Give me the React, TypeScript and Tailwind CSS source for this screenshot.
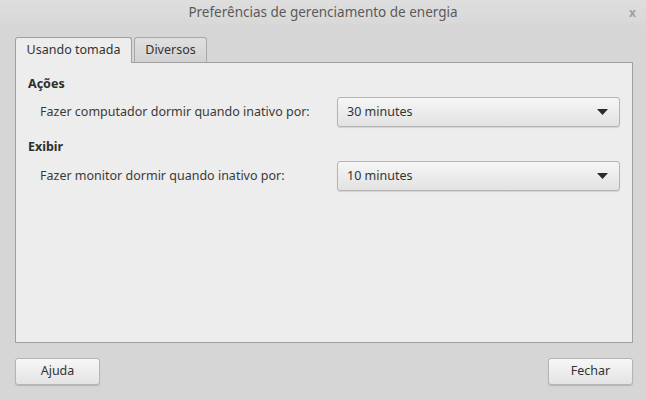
const font = { fontFamily: '"Noto Sans", "Open Sans", sans-serif' };

const Combo = ({ value }: { value: string }) => (
  <div className="flex h-[30px] w-[283px] items-center justify-between rounded-[3px] border border-[#b4b4b4] bg-gradient-to-b from-[#f6f6f6] to-[#e2e2e2] pl-[9px] pr-[11px] text-[#333] shadow-[0_1px_1px_rgba(0,0,0,0.12)]">
    <span>{value}</span>
    <svg width="11" height="6" viewBox="0 0 11 6">
      <path d="M0 0h11L5.5 6z" fill="#2a2a2a" />
    </svg>
  </div>
);

const Button = ({ label }: { label: string }) => (
  <button className="flex h-[27px] w-[85px] items-center justify-center rounded-[3px] border border-[#b4b4b4] bg-gradient-to-b from-[#f7f7f7] to-[#e3e3e3] text-[#333] shadow-[0_1px_1px_rgba(0,0,0,0.15)]">
    {label}
  </button>
);

export default function App() {
  return (
    <div
      className="flex h-[400px] w-[646px] flex-col bg-[#d6d6d6] text-[12.5px] text-[#3a3a3a]"
      style={font}
    >
      {/* Title bar */}
      <div className="grid h-[25px] grid-cols-[40px_1fr_40px] items-center bg-gradient-to-b from-[#dedede] to-[#d8d8d8]">
        <div />
        <div className="text-center text-[13.5px] text-[#5a5a5a]">Preferências de gerenciamento de energia</div>
        <div className="flex justify-end pr-[10px] text-[12px] font-bold text-[#a0a0a0]">x</div>
      </div>

      <div className="flex flex-1 flex-col pl-[15px] pr-[13px] pt-[12px]">
        {/* Tabs */}
        <div className="flex h-[25px] items-end gap-[2px]">
          <div className="relative z-10 mb-[-1px] flex h-[26px] w-[117px] items-center justify-center rounded-t-[3px] border border-b-0 border-[#a0a0a0] bg-[#ededed] text-[#333]">
            Usando tomada
          </div>
          <div className="flex h-[25px] w-[73px] items-center justify-center rounded-t-[3px] border border-b-0 border-[#a8a8a8] bg-gradient-to-b from-[#e0e0e0] to-[#d2d2d2] text-[#333]">
            Diversos
          </div>
        </div>

        {/* Panel */}
        <div className="flex h-[281px] flex-col border border-[#a0a0a0] bg-[#ededed] pl-[12px] pr-[12px] pt-[12px]">
          <div className="h-[18px] font-bold leading-[18px] text-[#2e2e2e]">Ações</div>
          <div className="mt-[4px] flex h-[30px] items-center justify-between pl-[12px]">
            <span>Fazer computador dormir quando inativo por:</span>
            <Combo value="30 minutes" />
          </div>
          <div className="mt-[11px] h-[18px] font-bold leading-[18px] text-[#2e2e2e]">Exibir</div>
          <div className="mt-[5px] flex h-[30px] items-center justify-between pl-[12px]">
            <span>Fazer monitor dormir quando inativo por:</span>
            <Combo value="10 minutes" />
          </div>
        </div>

        {/* Footer buttons */}
        <div className="mt-[15px] flex items-center justify-between">
          <Button label="Ajuda" />
          <Button label="Fechar" />
        </div>
      </div>
    </div>
  );
}
